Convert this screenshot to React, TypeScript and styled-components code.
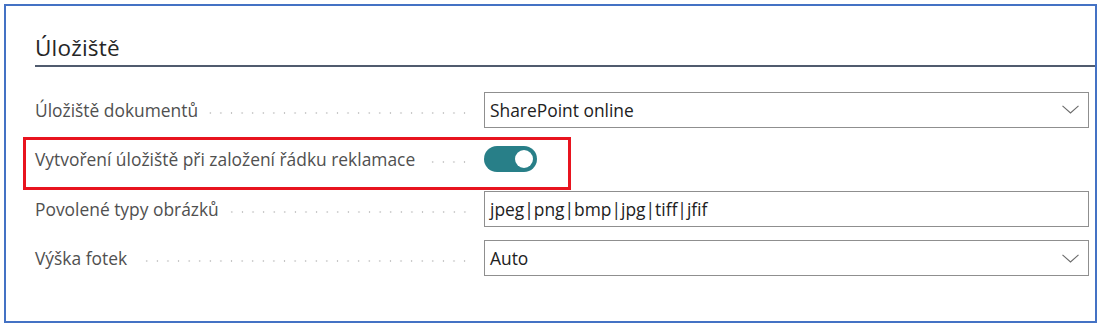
import React from "react";
import styled, { createGlobalStyle } from "styled-components";

const GlobalStyle = createGlobalStyle`
  html, body {
    margin: 0;
    padding: 0;
    background: #ffffff;
  }
  body {
    font-family: "Open Sans", "Noto Sans", "Liberation Sans", sans-serif;
  }
`;

type Field =
  | { label: string; kind: "select"; value: string }
  | { label: string; kind: "text"; value: string }
  | { label: string; kind: "toggle"; on: boolean; marked?: boolean };

const fields: Field[] = [
  { label: "Úložiště dokumentů", kind: "select", value: "SharePoint online" },
  {
    label: "Vytvoření úložiště při založení řádku reklamace",
    kind: "toggle",
    on: true,
    marked: true,
  },
  {
    label: "Povolené typy obrázků",
    kind: "text",
    value: "jpeg|png|bmp|jpg|tiff|jfif",
  },
  { label: "Výška fotek", kind: "select", value: "Auto" },
];

const Chevron = () => (
  <svg width="17" height="9" viewBox="0 0 17 9" fill="none">
    <path d="M0.5 0.8 L8.5 8 L16.5 0.8" stroke="#6b6b6b" strokeWidth="1.1" />
  </svg>
);

export default function App() {
  return (
    <>
      <GlobalStyle />
      <Frame>
        <Header>
          <Title>Úložiště</Title>
        </Header>
        <Fields>
          {fields.map((f) => (
            <Row key={f.label}>
              <Caption>
                <CaptionText>{f.label}</CaptionText>
                <Leader />
              </Caption>
              {f.kind === "select" && (
                <Input>
                  <InputValue>{f.value}</InputValue>
                  <Chevron />
                </Input>
              )}
              {f.kind === "text" && (
                <Input>
                  <InputValue>{f.value}</InputValue>
                </Input>
              )}
              {f.kind === "toggle" && (
                <Toggle $on={f.on}>
                  <Knob />
                </Toggle>
              )}
              {f.kind === "toggle" && f.marked && <Highlight />}
            </Row>
          ))}
        </Fields>
      </Frame>
    </>
  );
}

const Frame = styled.div`
  box-sizing: border-box;
  margin: 4px 0 0 4px;
  width: 1093px;
  height: 319px;
  border: 2px solid #4472c4;
  padding-left: 29px;
`;

const Header = styled.div`
  padding: 28.5px 0 4.5px 0;
  border-bottom: 2px solid #505b6e;
`;

const Title = styled.h2`
  margin: 0;
  font-size: 22.5px;
  line-height: 26px;
  font-weight: 400;
  color: #262626;
  letter-spacing: 0.2px;
`;

const Fields = styled.div`
  margin-top: 18px;
  padding-right: 6px;
  display: flex;
  flex-direction: column;
`;

const Row = styled.div`
  position: relative;
  height: 49.5px;
  display: flex;
  align-items: center;
`;

const Caption = styled.div`
  width: 435px;
  margin-right: 14px;
  display: flex;
  align-items: center;
`;

const CaptionText = styled.span`
  font-size: 17.4px;
  line-height: 22px;
  color: #505050;
  white-space: nowrap;
`;

const Leader = styled.span`
  flex: 1;
  height: 2px;
  margin: 6px 0 0 11px;
  background-image: radial-gradient(circle, #c4c4c4 0.9px, transparent 1.1px);
  background-size: 10.6px 2px;
  background-position: right center;
  background-repeat: repeat-x;
`;

const Input = styled.div`
  box-sizing: border-box;
  flex: 1;
  height: 36px;
  border: 1px solid #8f8f8f;
  padding: 0 9px 0 5px;
  display: flex;
  align-items: center;
  justify-content: space-between;
`;

const InputValue = styled.span`
  font-size: 17.4px;
  color: #212121;
`;

const Toggle = styled.div<{ $on: boolean }>`
  box-sizing: border-box;
  width: 53px;
  height: 26px;
  border-radius: 13px;
  background: ${(p) => (p.$on ? "#287f88" : "#ffffff")};
  display: flex;
  align-items: center;
  justify-content: ${(p) => (p.$on ? "flex-end" : "flex-start")};
  padding: 0 4px;
`;

const Knob = styled.span`
  width: 18px;
  height: 18px;
  border-radius: 50%;
  background: #ffffff;
`;

const Highlight = styled.div`
  position: absolute;
  box-sizing: border-box;
  left: -12px;
  top: 2.5px;
  width: 548px;
  height: 53px;
  border: 3px solid #e8141f;
  pointer-events: none;
`;
